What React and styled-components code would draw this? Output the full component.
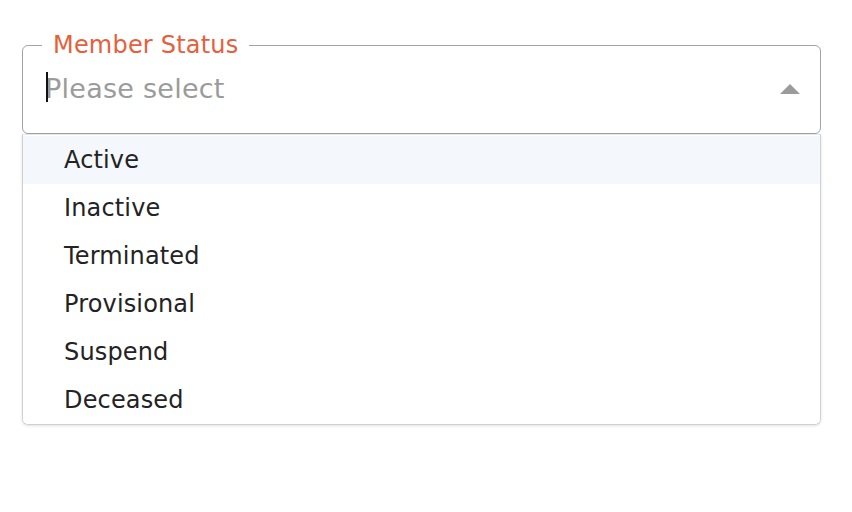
import React from "react";
import styled, { createGlobalStyle } from "styled-components";

const GlobalStyle = createGlobalStyle`
  html, body { margin: 0; padding: 0; background: #ffffff; }
  body { font-family: "DejaVu Sans", "Liberation Sans", sans-serif; }
  * { box-sizing: border-box; }
`;

const Page = styled.div`
  width: 852px;
  height: 512px;
  padding: 33px 31px 0 22px;
`;

const Field = styled.fieldset`
  margin: 0;
  padding: 0 20px 12px 19px;
  border: 1px solid #9fa4a4;
  border-radius: 6px;
  min-width: 0;
`;

const Legend = styled.legend`
  padding: 0 11px;
  font-size: 24px;
  line-height: 24px;
  letter-spacing: 0.2px;
  color: #e5603b;
`;

const Row = styled.div`
  height: 64px;
  display: flex;
  align-items: center;
  justify-content: space-between;
`;

const InputArea = styled.div`
  position: relative;
  margin-left: 3px;
  font-size: 27px;
  line-height: 30px;
  letter-spacing: 0.25px;
  color: #9b9b9b;
`;

const Caret = styled.span`
  position: absolute;
  left: 1px;
  top: -2px;
  width: 2px;
  height: 30px;
  background: #111;
`;

const Arrow = styled.svg`
  width: 20px;
  height: 10px;
  display: block;
  flex: none;
`;

const Menu = styled.ul`
  list-style: none;
  margin: 0;
  padding: 1px 0 0;
  border: 1px solid #d0d0d0;
  border-top-color: #e6e6e6;
  border-radius: 0 0 6px 6px;
  box-shadow: 0 1px 3px rgba(0, 0, 0, 0.12);
  overflow: hidden;
`;

const Item = styled.li`
  height: 48px;
  line-height: 48px;
  padding-left: 41px;
  font-size: 24px;
  letter-spacing: 0.15px;
  color: #232323;
  background: ${(p) => (p.$active ? "#f4f8fc" : "#ffffff")};
`;

const options = ["Active", "Inactive", "Terminated", "Provisional", "Suspend", "Deceased"];

export default function App() {
  return (
    <>
      <GlobalStyle />
      <Page>
        <Field>
          <Legend>Member Status</Legend>
          <Row>
            <InputArea>
              <Caret />
              Please select
            </InputArea>
            <Arrow viewBox="0 0 20 10">
              <polygon points="0,10 10,0 20,10" fill="#9b9b9b" />
            </Arrow>
          </Row>
        </Field>
        <Menu>
          {options.map((o, i) => (
            <Item key={o} $active={i === 0}>
              {o}
            </Item>
          ))}
        </Menu>
      </Page>
    </>
  );
}
